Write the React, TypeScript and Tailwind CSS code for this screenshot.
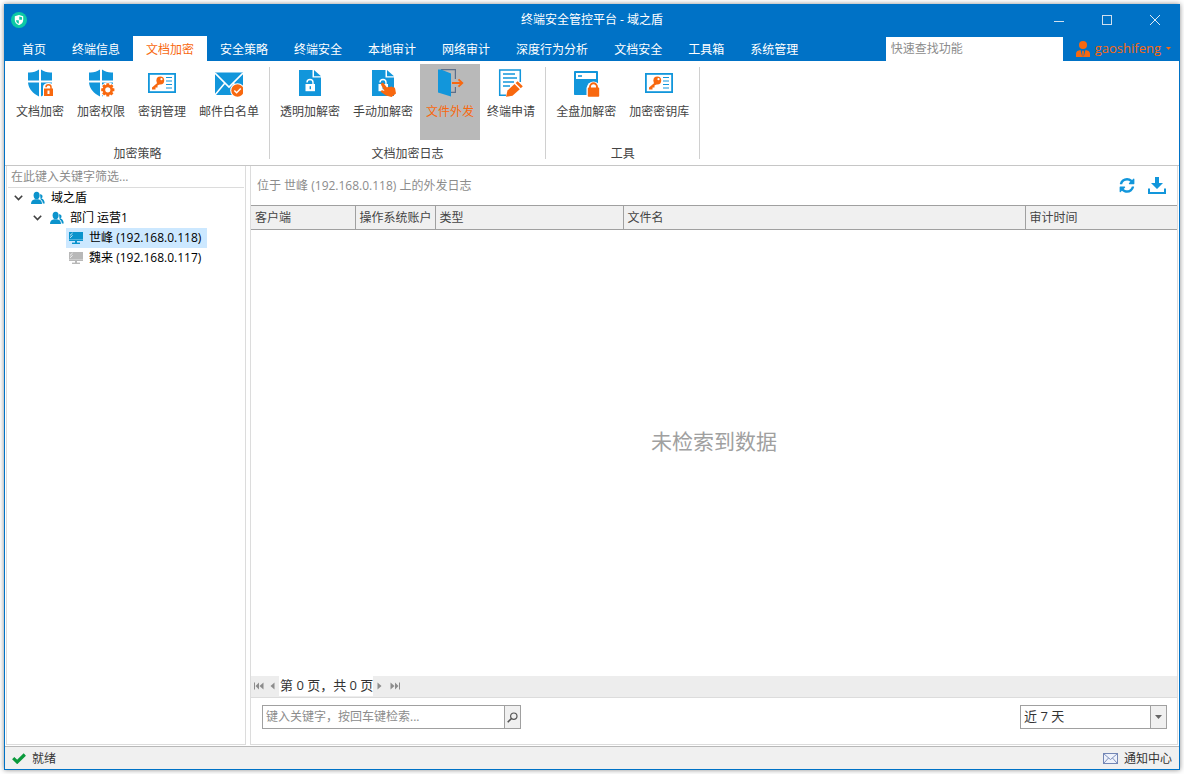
import React, { useState } from "react";

const ORANGE = "#f8680f";
const BLUE = "#1296db";

/* ---------- ribbon icons, all on a 28x28 grid ---------- */

function ShieldBase() {
  return (
    <g fill={BLUE}>
      <path d="M2 3.5C6 4 10 2.5 13 0.5V11.5H2z" />
      <path d="M15 0.5C18 2.5 22 4 26 3.5V11.5H15z" />
      <path d="M2 13.5H13V27.5C7 24.5 2.5 20 2 13.5z" />
      <path d="M15 13.5H26C25.5 20 21 24.5 15 27.5z" />
    </g>
  );
}

function ShieldLockIcon() {
  return (
    <svg width="28" height="28" viewBox="0 0 28 28">
      <ShieldBase />
      <path d="M17 28V18.5Q17 14 22.5 14T28 18.5V28z" fill="#fff" />
      <path d="M20 18.2a2.5 2.5 0 0 1 5 0V20" fill="none" stroke={ORANGE} strokeWidth="1.5" />
      <rect x="18" y="19.5" width="9" height="7.5" fill={ORANGE} />
      <rect x="21.5" y="21.5" width="2" height="3.5" fill="#fff" />
    </svg>
  );
}

function ShieldGearIcon() {
  const teeth = [0, 45, 90, 135, 180, 225, 270, 315];
  return (
    <svg width="28" height="28" viewBox="0 0 28 28">
      <ShieldBase />
      <circle cx="20.8" cy="20.8" r="7.6" fill="#fff" />
      {teeth.map((a) => (
        <rect
          key={a}
          x="19.3"
          y="14.2"
          width="3"
          height="3.5"
          rx="0.5"
          fill={ORANGE}
          transform={`rotate(${a} 20.8 20.8)`}
        />
      ))}
      <circle cx="20.8" cy="20.8" r="3.9" fill="none" stroke={ORANGE} strokeWidth="2.6" />
    </svg>
  );
}

function KeyCardIcon() {
  return (
    <svg width="28" height="28" viewBox="0 0 28 28">
      <rect x="0.9" y="4.9" width="26.2" height="18.2" fill="#fff" stroke={BLUE} strokeWidth="1.8" />
      <path d="M18 8.5h6M18 12h6M18 15.5h6M18 19h6" stroke={BLUE} strokeWidth="1.1" />
      <path d="M11 12.5L4 18.5V20.5H7.5V18.5H9.5V16.5L13 14.5z" fill={ORANGE} />
      <circle cx="12.3" cy="11.5" r="3.9" fill={ORANGE} />
      <circle cx="13.5" cy="10.2" r="1.1" fill="#fff" />
    </svg>
  );
}

function MailCheckIcon() {
  return (
    <svg width="28" height="28" viewBox="0 0 28 28">
      <rect x="0" y="3.5" width="28" height="22.5" fill={BLUE} />
      <path d="M0 4L14 18 28 4M0 26L9.5 14.5M28 26L18.5 14.5" fill="none" stroke="#fff" strokeWidth="1.6" />
      <circle cx="22.5" cy="21.5" r="7.3" fill="#fff" />
      <circle cx="22.5" cy="21.5" r="6.2" fill={ORANGE} />
      <path d="M19.3 21.5l2.3 2.3 4.2-4.3" fill="none" stroke="#fff" strokeWidth="1.5" />
    </svg>
  );
}

function DocLockBase() {
  return (
    <g>
      <path d="M3 1H16.5V8.5H25V27H3z" fill={BLUE} />
      <path d="M18 1L25 7.3H18z" fill={BLUE} />
      <path d="M11 13.5a3 3 0 0 1 6 0V15.5" fill="none" stroke="#fff" strokeWidth="1.4" />
      <rect x="9.5" y="15" width="9.5" height="7.2" fill="#fff" />
      <rect x="13.6" y="17.2" width="1.4" height="3" fill={BLUE} />
    </g>
  );
}

function DocLockIcon() {
  return (
    <svg width="28" height="28" viewBox="0 0 28 28">
      <DocLockBase />
    </svg>
  );
}

function DocHandIcon() {
  return (
    <svg width="28" height="28" viewBox="0 0 28 28">
      <DocLockBase />
      <path
        d="M12.5 14.2C13.5 13.4 14.6 14 15.2 15L18 18.6C18.8 17.5 20.2 17.7 20.8 18.3 21.8 17.2 23.2 17.5 23.8 18.5 25 18 26 18.8 26.2 20L27 24.5 22.5 28 17 26.5 12 23C11.4 22 12.5 21 13.8 21.4L15.5 22 12.3 16.2C12 15.5 12 14.7 12.5 14.2z"
        fill={ORANGE}
      />
    </svg>
  );
}

function DoorOutIcon() {
  return (
    <svg width="28" height="28" viewBox="0 0 28 28">
      <path d="M5 0.6H19.4V10M19.4 18V23.4H15" fill="none" stroke="#5d6f8a" strokeWidth="1.2" />
      <path d="M2 0.5H5L15 4.5V27.5L2 23.5z" fill={BLUE} />
      <path d="M16 14H26M22.5 10.3L26.3 14 22.5 17.7" fill="none" stroke={ORANGE} strokeWidth="1.8" />
    </svg>
  );
}

function FormPenIcon() {
  return (
    <svg width="28" height="28" viewBox="0 0 28 28">
      <path d="M23.3 13V1H2.7V26.3H9" fill="none" stroke={BLUE} strokeWidth="1.5" />
      <path d="M6 5H18M6 9H20M6 13H17M6 17H13" stroke={BLUE} strokeWidth="1.7" />
      <path d="M11 20L19 12.5 25.5 18.5 17 26.5 8.5 28z" fill="#fff" />
      <path d="M10.5 21.5L17.5 15 22.8 20.3 15.5 26.8 9 27.8z" fill={ORANGE} />
      <path d="M18.6 14L20.6 12.2 25.8 17.3 23.8 19.3z" fill={ORANGE} />
    </svg>
  );
}

function DiskLockIcon() {
  return (
    <svg width="28" height="28" viewBox="0 0 28 28">
      <rect x="2" y="2" width="24" height="24" rx="0.8" fill={BLUE} />
      <rect x="4" y="4" width="20" height="6" fill="#fff" />
      <path d="M6 7h4" stroke={BLUE} strokeWidth="1.6" />
      <path d="M14.5 28V19Q16 12.5 21.5 12.5T28 19V28z" fill="#fff" />
      <path d="M18 20V17.8a3.5 3.5 0 0 1 7 0V20" fill="none" stroke={ORANGE} strokeWidth="1.9" />
      <rect x="15.8" y="18.6" width="11.4" height="9.2" rx="0.8" fill={ORANGE} />
    </svg>
  );
}

/* ---------- small icons ---------- */

function LogoIcon() {
  return (
    <svg width="16" height="16" viewBox="0 0 16 16">
      <circle cx="8" cy="8" r="8" fill="#0dc9a5" />
      <path d="M8 3L12.2 4.3V8C12.2 10.5 10.5 12.2 8 13.2 5.5 12.2 3.8 10.5 3.8 8V4.3z" fill="#fff" />
      <path d="M8.3 4.4L11 5.2V7.8H8.3zM5 8.2H7.8V11.8C6 11 5 9.8 5 8.2z" fill="#0dc9a5" />
    </svg>
  );
}

function UserIcon() {
  return (
    <svg width="14" height="16" viewBox="0 0 14 16" fill={ORANGE}>
      <circle cx="7" cy="4" r="4" />
      <path d="M0 16V12.5C0 10.5 2 9.3 4.5 9L6.2 15.5H6.4L6 10.5 7 9.2 8 10.5 7.6 15.5H7.8L9.5 9C12 9.3 14 10.5 14 12.5V16z" />
    </svg>
  );
}

function PeopleIcon() {
  return (
    <svg width="14" height="14" viewBox="0 0 14 14" fill="#0b93cc">
      <path d="M9 3.2a2.3 2.3 0 0 1 1.4 4.3C12.600 8 13.700 9.800 13.700 12.500H11.800C11.800 10.500 11 9.200 9.600 8.400z" />
      <ellipse cx="5.600" cy="4.400" rx="3" ry="3.600" />
      <path d="M0 13C0 9.800 1.800 8.600 4.200 8.200H7C9.400 8.600 11 9.800 11 13z" />
    </svg>
  );
}

function MonitorIcon({ online }: { online: boolean }) {
  const color = online ? "#0b93cc" : "#b8b8b8";
  return (
    <svg width="14" height="12" viewBox="0 0 14 12">
      <rect width="14" height="9" fill={color} />
      <rect x="6" y="9" width="2" height="2" fill={color} />
      <rect x="3" y="10.6" width="8" height="1.4" fill={color} />
      <path d="M1 3.4L3.600 1M1 5.800L3.600 3.400" stroke="#fff" strokeWidth="0.8" />
      <path d="M0 7.5H14" stroke="#fff" strokeWidth="0.3" />
    </svg>
  );
}

function ChevronIcon() {
  return (
    <svg width="9" height="6" viewBox="0 0 9 6">
      <path d="M0.8 0.8L4.5 4.5 8.2 0.8" fill="none" stroke="#404040" strokeWidth="1.6" />
    </svg>
  );
}

function RefreshIcon() {
  return (
    <svg width="16" height="16" viewBox="0 0 1536 1664" fill={BLUE}>
      <path d="M1511 928q0 5-1 7-64 268-268 434.5t-478 166.5q-146 0-282.5-55t-243.500-157l-129 129q-19 19-45 19t-45-19-19-45v-448q0-26 19-45t45-19h448q26 0 45 19t19 45-19 45l-137 137q71 66 161 102t187 36q134 0 250-65t186-179q11-17 53-117 8-23 30-23h192q13 0 22.500 9.500t9.500 22.500zm25-800v448q0 26-19 45t-45 19h-448q-26 0-45-19t-19-45 19-45l138-138q-148-137-349-137-134 0-250 65t-186 179q-11 17-53 117-8 23-30 23h-199q-13 0-22.500-9.500t-9.500-22.500v-7q65-268 270-434.500t480-166.500q146 0 284 55.500t245 156.500l130-129q19-19 45-19t45 19 19 45z" />
    </svg>
  );
}

function DownloadIcon() {
  return (
    <svg width="18" height="17" viewBox="0 0 18 17">
      <path d="M7 0H11V6H15L9 12 3 6H7z" fill={BLUE} />
      <path d="M1 11.500V16H17V11.500" fill="none" stroke={BLUE} strokeWidth="2" />
    </svg>
  );
}

function PagerIcon({ last, flip }: { last?: boolean; flip?: boolean }) {
  return (
    <svg
      width={last ? 10 : 5}
      height="8"
      viewBox={last ? "0 0 10 8" : "0 0 5 8"}
      className={flip ? "rotate-180" : ""}
      fill="#8c8c8c"
    >
      {last ? <path d="M0 0.500H1V7.500H0zM5 0.500V7.500L1.500 4zM9.500 0.500V7.500L5.500 4z" /> : <path d="M4.500 0.500V7.500L0.500 4z" />}
    </svg>
  );
}

/* ---------- data ---------- */

const TABS = [
  "首页",
  "终端信息",
  "文档加密",
  "安全策略",
  "终端安全",
  "本地审计",
  "网络审计",
  "深度行为分析",
  "文档安全",
  "工具箱",
  "系统管理",
];

const GROUPS = [
  {
    title: "加密策略",
    items: [
      { label: "文档加密", icon: <ShieldLockIcon /> },
      { label: "加密权限", icon: <ShieldGearIcon /> },
      { label: "密钥管理", icon: <KeyCardIcon /> },
      { label: "邮件白名单", icon: <MailCheckIcon /> },
    ],
  },
  {
    title: "文档加密日志",
    items: [
      { label: "透明加解密", icon: <DocLockIcon /> },
      { label: "手动加解密", icon: <DocHandIcon /> },
      { label: "文件外发", icon: <DoorOutIcon /> },
      { label: "终端申请", icon: <FormPenIcon /> },
    ],
  },
  {
    title: "工具",
    items: [
      { label: "全盘加解密", icon: <DiskLockIcon /> },
      { label: "加密密钥库", icon: <KeyCardIcon /> },
    ],
  },
];

const CLIENTS = [
  { name: "世峰", ip: "192.168.0.118", online: true },
  { name: "魏来", ip: "192.168.0.117", online: false },
];

const COLUMNS = [
  { label: "客户端", width: "w-[104px]" },
  { label: "操作系统账户", width: "w-20" },
  { label: "类型", width: "w-[188px]" },
  { label: "文件名", width: "w-[402px]" },
  { label: "审计时间", width: "" },
];

/* ---------- sections ---------- */

function TitleBar() {
  return (
    <div className="grid h-[31px] grid-cols-[1fr_auto_1fr] items-center pb-px text-white">
      <div className="pl-1.5">
        <LogoIcon />
      </div>
      <h1>终端安全管控平台 - 域之盾</h1>
      <div className="flex justify-end">
        <button aria-label="最小化" className="flex h-[30px] w-12 items-center justify-center">
          <svg width="10" height="10" viewBox="0 0 10 10">
            <path d="M0 6.500H10" stroke="#cfdfee" />
          </svg>
        </button>
        <button aria-label="最大化" className="flex h-[30px] w-12 items-center justify-center">
          <svg width="10" height="10" viewBox="0 0 10 10">
            <rect x="0.500" y="0.500" width="9" height="9" fill="none" stroke="#cfdfee" />
          </svg>
        </button>
        <button aria-label="关闭" className="flex h-[30px] w-12 items-center justify-center">
          <svg width="10" height="10" viewBox="0 0 10 10">
            <path d="M0 0L10 10M10 0L0 10" stroke="#dfeaf4" />
          </svg>
        </button>
      </div>
    </div>
  );
}

function TabBar({ active, onSelect }: { active: string; onSelect: (t: string) => void }) {
  return (
    <div className="flex h-[25px] items-stretch pl-1">
      <nav className="flex">
        {TABS.map((t) => (
          <button
            key={t}
            onClick={() => onSelect(t)}
            className={`px-[13px] pt-0.5 whitespace-nowrap ${t === active ? "bg-white text-[#f8680f]" : "text-white"}`}
          >
            {t}
          </button>
        ))}
      </nav>
      <div className="ml-auto flex items-stretch">
        <input
          type="text"
          aria-label="快速查找功能"
          placeholder="快速查找功能"
          className="mt-px w-[177px] bg-white px-[5px] text-gray-700 outline-none placeholder:text-[#8c8c8c]"
        />
        <button className="flex items-center gap-[5px] pr-2 pl-[13px] text-[13px] text-[#f8680f]">
          <UserIcon />
          gaoshifeng
          <svg width="5" height="3" viewBox="0 0 5 3">
            <path d="M0 0H5L2.500 3z" fill={ORANGE} />
          </svg>
        </button>
      </div>
    </div>
  );
}

function Ribbon({ active, onSelect }: { active: string; onSelect: (l: string) => void }) {
  return (
    <div className="flex border-b border-[#c6c6c6] bg-white pt-[3px] pb-[3px] pl-px text-[#444]">
      {GROUPS.map((g) => (
        <section key={g.title} className="flex">
          <div className="flex flex-col px-1">
            <div className="flex gap-px">
              {g.items.map((it) => (
                <button
                  key={it.label}
                  onClick={() => onSelect(it.label)}
                  className={`flex h-[76px] flex-col items-center gap-[7px] px-1.5 pt-[5px] whitespace-nowrap ${
                    it.label === active ? "bg-[#b9b9b9] text-[#f8680f]" : ""
                  }`}
                >
                  {it.icon}
                  {it.label}
                </button>
              ))}
            </div>
            <h2 className="mt-1.5 text-center">{g.title}</h2>
          </div>
          <div className="my-[3px] w-px bg-[#d0d0d0]" />
        </section>
      ))}
    </div>
  );
}

function Sidebar() {
  const [selected, setSelected] = useState("世峰");
  return (
    <aside className="flex w-60 shrink-0 flex-col border-x border-b border-[#dcdcdc] text-black">
      <input
        type="text"
        aria-label="筛选"
        placeholder="在此键入关键字筛选..."
        className="mx-px h-[22px] border-b border-[#dcdcdc] px-[3px] outline-none placeholder:text-[#8c8c8c]"
      />
      <ul className="leading-5">
        <li>
          <div className="flex h-5 items-center pl-[7px]">
            <button aria-label="折叠 域之盾" className="mr-2">
              <ChevronIcon />
            </button>
            <PeopleIcon />
            <span className="ml-1.5">域之盾</span>
          </div>
          <ul>
            <li>
              <div className="flex h-5 items-center pl-[26px]">
                <button aria-label="折叠 部门 运营1" className="mr-2">
                  <ChevronIcon />
                </button>
                <PeopleIcon />
                <span className="ml-1.5">部门 运营1</span>
              </div>
              <ul className="pl-[59px]">
                {CLIENTS.map((c) => (
                  <li key={c.ip}>
                    <button
                      onClick={() => setSelected(c.name)}
                      className={`flex h-5 items-center gap-1.5 pr-1.5 pl-[3px] ${
                        c.name === selected ? "bg-[#cce8ff]" : ""
                      }`}
                    >
                      <MonitorIcon online={c.online} />
                      {c.name} ({c.ip})
                    </button>
                  </li>
                ))}
              </ul>
            </li>
          </ul>
        </li>
      </ul>
    </aside>
  );
}

function LogPanel() {
  const [keyword, setKeyword] = useState("");
  return (
    <main className="flex min-w-0 flex-1 flex-col border-x border-b border-[#dcdcdc]">
      <div className="flex h-[39px] items-center justify-between pr-[11px] pl-1.5 text-[#8c8c8c]">
        <p>位于 世峰 (192.168.0.118) 上的外发日志</p>
        <div className="flex items-center gap-[13px]">
          <button aria-label="刷新">
            <RefreshIcon />
          </button>
          <button aria-label="下载">
            <DownloadIcon />
          </button>
        </div>
      </div>

      <table className="w-full table-fixed border-y border-[#a0a0a0] bg-[#f0f0f0] text-[#444]">
        <thead>
          <tr>
            {COLUMNS.map((c) => (
              <th
                key={c.label}
                scope="col"
                className={`h-6 border-r border-[#a0a0a0] p-0 pl-1 text-left font-normal whitespace-nowrap last:border-r-0 ${c.width}`}
              >
                {c.label}
              </th>
            ))}
          </tr>
        </thead>
      </table>

      <div className="flex flex-1 items-center justify-center pb-6 text-[21px] text-[#a0a0a0]">
        <p>未检索到数据</p>
      </div>

      <div className="flex h-[22px] items-start border-b border-[#dcdcdc] bg-[#ededed] pl-[3px] text-[#333]">
        <button aria-label="第一页" className="flex h-5 items-center">
          <PagerIcon last />
        </button>
        <button aria-label="上一页" className="ml-1.5 flex h-5 items-center">
          <PagerIcon />
        </button>
        <span className="mx-1 h-5 bg-white pl-px text-[13px] leading-[18px]">第 0 页，共 0 页</span>
        <button aria-label="下一页" className="flex h-5 items-center">
          <PagerIcon flip />
        </button>
        <button aria-label="最后一页" className="ml-2 flex h-5 items-center">
          <PagerIcon last flip />
        </button>
      </div>

      <div className="flex items-center justify-between pt-[7px] pr-2.5 pb-[15px] pl-[11px]">
        <div className="flex h-6 w-[259px] border border-[#a0a0a0]">
          <input
            type="text"
            aria-label="关键字"
            value={keyword}
            onChange={(e) => setKeyword(e.target.value)}
            placeholder="键入关键字，按回车键检索..."
            className="min-w-0 flex-1 px-[3px] outline-none placeholder:text-[#8c8c8c]"
          />
          <button
            aria-label="检索"
            className="flex w-4 items-center justify-center border-l border-[#a0a0a0] bg-[#f0f0f0]"
          >
            <svg width="11" height="11" viewBox="0 0 11 11" fill="none" stroke="#555">
              <circle cx="6.800" cy="4.200" r="3.200" strokeWidth="1.200" />
              <path d="M4.500 6.500L0.700 10.300" strokeWidth="1.600" />
            </svg>
          </button>
        </div>
        <div className="relative">
          <select
            aria-label="时间范围"
            className="block h-6 w-[147px] appearance-none border border-[#a0a0a0] bg-white pl-[3px] text-[13px] text-[#333] outline-none"
          >
            <option>近 7 天</option>
            <option>近 30 天</option>
          </select>
          <span className="pointer-events-none absolute inset-y-px right-px flex w-4 items-center justify-center border-l border-[#a0a0a0] bg-[#f0f0f0]">
            <svg width="7" height="4" viewBox="0 0 7 4">
              <path d="M0 0H7L3.500 4z" fill="#666" />
            </svg>
          </span>
        </div>
      </div>
    </main>
  );
}

function StatusBar() {
  return (
    <footer className="flex h-[23px] items-center justify-between border-t border-[#b8b8b8] bg-[#f0f0f0] px-[7px] pt-px text-[#333]">
      <div className="flex items-center gap-1.5">
        <svg width="14" height="11" viewBox="0 0 14 11">
          <path d="M1.200 5.200L5.200 9 12.800 1.500" fill="none" stroke="#0a9a3c" strokeWidth="3.200" />
        </svg>
        就绪
      </div>
      <button className="flex items-center gap-1.5">
        <svg width="15" height="11" viewBox="0 0 15 11" fill="#eef2fb" stroke="#7386b5">
          <rect x="0.500" y="0.500" width="14" height="10" />
          <path d="M1 1L7.500 6.500 14 1M1 10L5.500 5M14 10L9.500 5" fill="none" strokeWidth="0.900" />
        </svg>
        通知中心
      </button>
    </footer>
  );
}

export default function App() {
  const [tab, setTab] = useState("文档加密");
  const [tool, setTool] = useState("文件外发");

  return (
    <div className="h-screen bg-white p-1 font-['Open_Sans','Noto_Sans_CJK_SC',sans-serif] text-xs">
      <div className="flex h-full flex-col border border-[#0072c6] bg-white shadow-[0_0_5px_rgba(0,0,0,0.45)]">
        <header className="bg-[#0072c6]">
          <TitleBar />
          <TabBar active={tab} onSelect={setTab} />
        </header>
        <Ribbon active={tool} onSelect={setTool} />
        <div className="flex min-h-0 flex-1 gap-1 px-px pb-px">
          <Sidebar />
          <LogPanel />
        </div>
        <StatusBar />
      </div>
    </div>
  );
}
